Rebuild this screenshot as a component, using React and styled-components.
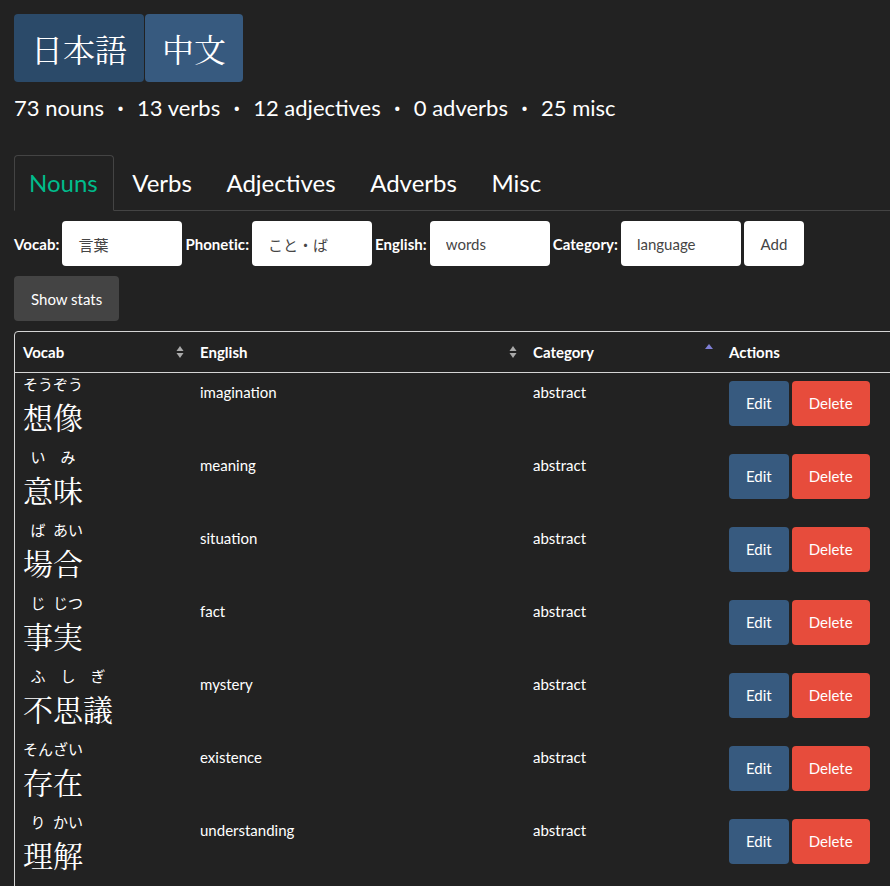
import React from "react";
import styled, { createGlobalStyle } from "styled-components";

const GlobalStyle = createGlobalStyle`
  html, body {
    margin: 0;
    padding: 0;
    background: #222222;
    overflow: hidden;
  }
  body {
    font-family: Lato, "Noto Sans", "Noto Sans CJK JP", sans-serif;
    color: #ffffff;
  }
`;

const Page = styled.div`
  padding: 14px;
  width: 890px;
  box-sizing: border-box;
`;

const LangGroup = styled.div`
  display: flex;
  gap: 1px;
`;

const LangButton = styled.button`
  border: none;
  border-radius: 4px;
  background: ${(p) => (p.$active ? "#2b4a69" : "#375a7f")};
  color: #fff;
  font-family: "Noto Serif CJK JP", "Liberation Serif", "Noto Sans CJK JP", serif;
  font-size: 32px;
  line-height: 48px;
  padding: 10px 17px;
  cursor: pointer;
`;

const Stats = styled.div`
  margin-top: 11px;
  font-size: 22px;
  line-height: 30px;
  display: flex;
  gap: 13.5px;
  white-space: nowrap;
`;

const Dot = styled.span`
  font-weight: 700;
`;

const Tabs = styled.ul`
  margin: 32px -14px 0 0;
  padding: 0;
  list-style: none;
  display: flex;
  border-bottom: 1px solid #444;
`;

const Tab = styled.li`
  font-size: 24px;
  line-height: 36px;
  padding: 9px 15.5px 9px 14px;
  margin-bottom: -1px;
  border: 1px solid ${(p) => (p.$active ? "#444" : "transparent")};
  border-bottom-color: ${(p) => (p.$active ? "#222" : "transparent")};
  border-radius: 4px 4px 0 0;
  color: ${(p) => (p.$active ? "#00bc8c" : "#fff")};
  & + & {
    padding-left: 17px;
  }
`;

const FormRow = styled.form`
  display: flex;
  align-items: center;
  gap: 3px;
  margin-top: 10px;
`;

const Label = styled.label`
  font-weight: 700;
  font-size: 15px;
  letter-spacing: 0.05px;
`;

const Input = styled.input`
  width: 120px;
  height: 45px;
  box-sizing: border-box;
  border: none;
  border-radius: 4px;
  background: #fff;
  color: #464545;
  padding: 1px 16px 0;
  font-family: Lato, "Noto Sans CJK JP", sans-serif;
  font-size: 15px;
  outline: none;
`;

const AddButton = styled.button`
  width: 60px;
  height: 45px;
  border: none;
  border-radius: 4px;
  background: #fff;
  color: #444;
  font-family: Lato, sans-serif;
  font-size: 15px;
`;

const StatsButton = styled.button`
  margin-top: 10px;
  height: 45px;
  padding: 0 17px;
  border: none;
  border-radius: 4px;
  background: #444;
  color: #fff;
  font-family: Lato, sans-serif;
  font-size: 15px;
`;

const TableWrap = styled.div`
  margin-top: 10px;
  width: 900px;
  border: 1px solid #d5d5d5;
  border-radius: 4px 0 0 0;
`;

const Table = styled.table`
  width: 100%;
  border-collapse: collapse;
  table-layout: fixed;
  font-size: 15px;
`;

const Th = styled.th`
  box-sizing: border-box;
  width: ${(p) => (p.$w ? `${p.$w}px` : "auto")};
  text-align: left;
  font-weight: 700;
  padding: 0 8px;
  height: 40px;
  border-bottom: 1px solid #d5d5d5;
  position: relative;
`;

const SortIcon = styled.svg`
  position: absolute;
  right: 8px;
  top: ${(p) => p.$top}px;
`;

const Td = styled.td`
  vertical-align: top;
  padding: 8px 8px 0;
  height: 65px;
  line-height: 22px;
`;

const VocabCell = styled.td`
  vertical-align: top;
  padding: 0 8px;
  height: 73px;
`;

const WordBox = styled.div`
  height: 73px;
  box-sizing: border-box;
  padding-top: 4px;
  overflow: hidden;
`;

const Word = styled.ruby`
  font-family: "Noto Serif CJK JP", "Liberation Serif", "Noto Sans CJK JP", serif;
  font-size: 30px;
  line-height: 36px;
  ruby-position: over;

  rt {
    font-family: "Noto Sans CJK JP", sans-serif;
    font-size: 15px;
    padding-bottom: 8px;
  }
`;

const Actions = styled.div`
  display: flex;
  gap: 3px;
`;

const ActionButton = styled.button`
  height: 45px;
  padding: 0 17px;
  border: none;
  border-radius: 4px;
  background: ${(p) => (p.$danger ? "#e74c3c" : "#375a7f")};
  color: #fff;
  font-family: Lato, sans-serif;
  font-size: 15px;
`;

const BothArrows = () => (
  <SortIcon $top={13} width="8" height="14" viewBox="0 0 8 14">
    <path d="M4 1 L7.5 6 H0.5 Z" fill="#aaa" />
    <path d="M4 13 L7.5 8 H0.5 Z" fill="#aaa" />
  </SortIcon>
);

const UpArrow = () => (
  <SortIcon $top={11} width="8" height="14" viewBox="0 0 8 14">
    <path d="M4 1 L8 6 H0 Z" fill="#7f7fd5" />
  </SortIcon>
);

const words = [
  { parts: [["想", "そう"], ["像", "ぞう"]], en: "imagination" },
  { parts: [["意", "い"], ["味", "み"]], en: "meaning" },
  { parts: [["場", "ば"], ["合", "あい"]], en: "situation" },
  { parts: [["事", "じ"], ["実", "じつ"]], en: "fact" },
  { parts: [["不", "ふ"], ["思", "し"], ["議", "ぎ"]], en: "mystery" },
  { parts: [["存", "そん"], ["在", "ざい"]], en: "existence" },
  { parts: [["理", "り"], ["解", "かい"]], en: "understanding" },
  { parts: [["言", "こと"], ["葉", "ば"]], en: "words" },
];

export default function App() {
  return (
    <Page>
      <GlobalStyle />
      <LangGroup>
        <LangButton $active>日本語</LangButton>
        <LangButton>中文</LangButton>
      </LangGroup>
      <Stats>
        <span>73 nouns</span>
        <Dot>·</Dot>
        <span>13 verbs</span>
        <Dot>·</Dot>
        <span>12 adjectives</span>
        <Dot>·</Dot>
        <span>0 adverbs</span>
        <Dot>·</Dot>
        <span>25 misc</span>
      </Stats>
      <Tabs>
        <Tab $active>Nouns</Tab>
        <Tab>Verbs</Tab>
        <Tab>Adjectives</Tab>
        <Tab>Adverbs</Tab>
        <Tab>Misc</Tab>
      </Tabs>
      <FormRow onSubmit={(e) => e.preventDefault()}>
        <Label>Vocab:</Label>
        <Input defaultValue="言葉" />
        <Label>Phonetic:</Label>
        <Input defaultValue="こと・ば" />
        <Label>English:</Label>
        <Input defaultValue="words" />
        <Label>Category:</Label>
        <Input defaultValue="language" />
        <AddButton type="submit">Add</AddButton>
      </FormRow>
      <StatsButton>Show stats</StatsButton>
      <TableWrap>
        <Table>
          <thead>
            <tr>
              <Th $w={177}>
                Vocab
                <BothArrows />
              </Th>
              <Th $w={333}>
                English
                <BothArrows />
              </Th>
              <Th $w={196}>
                Category
                <UpArrow />
              </Th>
              <Th>Actions</Th>
            </tr>
          </thead>
          <tbody>
            {words.map((w) => (
              <tr key={w.en}>
                <VocabCell>
                  <WordBox>
                    <Word>
                      {w.parts.map(([k, r]) => (
                        <React.Fragment key={k}>
                          {k}
                          <rt>{r}</rt>
                        </React.Fragment>
                      ))}
                    </Word>
                  </WordBox>
                </VocabCell>
                <Td>{w.en}</Td>
                <Td>abstract</Td>
                <Td>
                  <Actions>
                    <ActionButton>Edit</ActionButton>
                    <ActionButton $danger>Delete</ActionButton>
                  </Actions>
                </Td>
              </tr>
            ))}
          </tbody>
        </Table>
      </TableWrap>
    </Page>
  );
}
